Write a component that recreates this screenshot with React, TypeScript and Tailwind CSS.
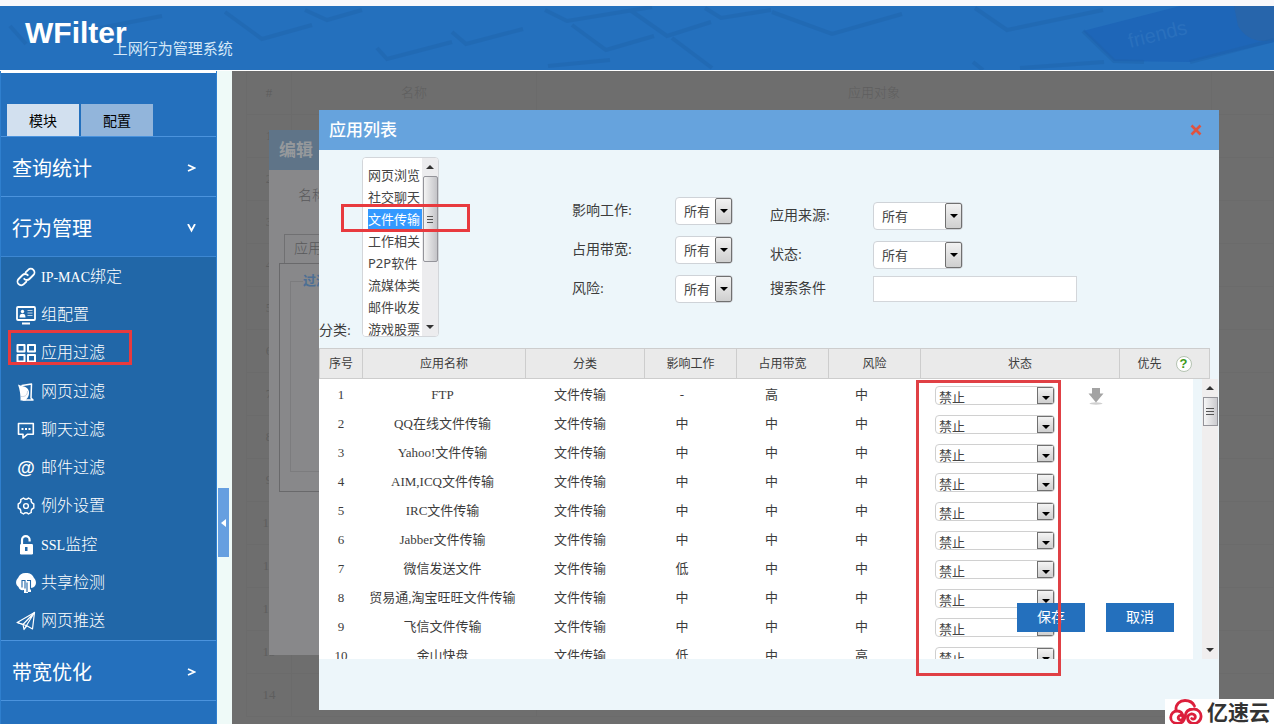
import { useState } from "react";
import type { ReactNode } from "react";

const SONG = "font-['Liberation_Serif','Noto_Sans_CJK_SC',serif]";
const HEI = "font-['Noto_Sans','Noto_Sans_CJK_SC',sans-serif]";

const categories = ["网页浏览", "社交聊天", "文件传输", "工作相关", "P2P软件", "流媒体类", "邮件收发", "游戏股票"];

type AppRow = { name: string; impact: string; bandwidth: string; risk: string };

const apps: AppRow[] = [
  { name: "FTP", impact: "-", bandwidth: "高", risk: "中" },
  { name: "QQ在线文件传输", impact: "中", bandwidth: "中", risk: "中" },
  { name: "Yahoo!文件传输", impact: "中", bandwidth: "中", risk: "中" },
  { name: "AIM,ICQ文件传输", impact: "中", bandwidth: "中", risk: "中" },
  { name: "IRC文件传输", impact: "中", bandwidth: "中", risk: "中" },
  { name: "Jabber文件传输", impact: "中", bandwidth: "中", risk: "中" },
  { name: "微信发送文件", impact: "低", bandwidth: "中", risk: "中" },
  { name: "贸易通,淘宝旺旺文件传输", impact: "中", bandwidth: "中", risk: "中" },
  { name: "飞信文件传输", impact: "中", bandwidth: "中", risk: "中" },
  { name: "金山快盘", impact: "低", bandwidth: "中", risk: "高" },
];

const stroke = { fill: "none", stroke: "currentColor", strokeLinejoin: "round", strokeLinecap: "round" } as const;

const icons: Record<string, ReactNode> = {
  link: (
    <g {...stroke} strokeWidth="1.8">
      <path d="M8.2 11.8a3.6 3.6 0 0 0 5.2.2l4-4a3.6 3.6 0 0 0-5.200-5.200L9.600 5.400" />
      <path d="M11.800 8.200a3.6 3.6 0 0 0-5.200-.2l-4 4a3.6 3.6 0 0 0 5.200 5.200l2.600-2.600" />
    </g>
  ),
  card: (
    <>
      <rect x="1" y="2" width="18" height="13" rx="1" {...stroke} strokeWidth="1.8" />
      <circle cx="6.5" cy="6.5" r="1.7" fill="currentColor" />
      <path d="M3.5 12.5c0-2.800 1-3.800 3-3.800s3 1 3 3.800z" fill="currentColor" />
      <path d="M11.5 5.5h5M11.5 8h5M11.5 10.5h5" stroke="currentColor" strokeWidth="1.2" opacity=".7" />
      <path d="M6 18.5h8" stroke="currentColor" strokeWidth="2" />
    </>
  ),
  grid: (
    <g {...stroke} strokeWidth="2">
      <rect x="1.500" y="2" width="7" height="6.500" />
      <rect x="12" y="2" width="7" height="6.500" />
      <rect x="1.500" y="12" width="7" height="6.500" />
      <rect x="12" y="12" width="7" height="6.500" />
    </g>
  ),
  page: (
    <>
      <path d="M6 3.5 15.500 2l-.5 14 2 2H7" {...stroke} strokeWidth="1.5" />
      <path d="M2 2.5c1.5 1 3 1 6 2 4 1.500 5.500 4 5 7.500-.4 3-2 4.500-3.500 6.500h-5c.3-5-.6-10.500-2.500-16z" fill="currentColor" />
      <path d="M5.500 14.500c3 .5 6-1 6-5" {...stroke} stroke="#c3cfdf" />
    </>
  ),
  chat: (
    <>
      <path d="M2.500 3.500h14.800v10.800h-6L7 18v-3.700H2.500z" {...stroke} strokeWidth="1.6" />
      <path d="M5.500 9h2M9 9h2M12.500 9h2" stroke="currentColor" strokeWidth="2" />
    </>
  ),
  gear: (
    <g {...stroke} strokeWidth="1.4">
      <path d="M7.500 2c1.600 1.600 3.400 1.600 5 0l2.800 1.600c-.5 2.200.3 3.700 2.500 4.400v4c-2.200.7-3 2.200-2.500 4.400L12.500 18c-1.600-1.600-3.400-1.600-5 0l-2.800-1.600c.5-2.200-.3-3.700-2.500-4.400V8c2.200-.7 3-2.200 2.500-4.400z" />
      <circle cx="10" cy="10" r="2.400" />
    </g>
  ),
  lock: (
    <>
      <path d="M6 9.500V5a3.800 3.800 0 0 1 7.600 0v1.500" fill="none" stroke="currentColor" strokeWidth="2.200" />
      <rect x="4" y="9" width="13" height="10.500" rx="1.200" fill="currentColor" />
      <rect x="9" y="12" width="2.500" height="4" fill="#2167a8" />
    </>
  ),
  share: (
    <>
      <path
        d="M10 0a8 8 0 0 1 8 5c3 3 2.500 8-1 9.500L15 15v4h-3v1H8v-3c-3 .6-5-.8-5.500-3C-.8 11.500-.5 7.500 2 5a8.500 8.500 0 0 1 8-5z"
        fill="currentColor"
      />
      <path d="M6 14.500V7.500h3v8M11 19v-9.500M11 7.500h3.500v9" fill="none" stroke="#2167a8" strokeWidth="1.100" />
    </>
  ),
  plane: (
    <g {...stroke} strokeWidth="1.2">
      <path d="M1.200 11.500 18.500 1.500 16.500 18 10.800 14.800z" />
      <path d="M1.200 11.500 7 13.500 18.500 1.500 8 18.500 7 13.500M8 18.500l2.800-3.700" />
    </g>
  ),
};

const menu = [
  { icon: "link", latin: "IP-MAC", label: "绑定" },
  { icon: "card", label: "组配置" },
  { icon: "grid", label: "应用过滤" },
  { icon: "page", label: "网页过滤" },
  { icon: "chat", label: "聊天过滤" },
  { icon: "at", label: "邮件过滤" },
  { icon: "gear", label: "例外设置" },
  { icon: "lock", latin: "SSL", label: "监控" },
  { icon: "share", label: "共享检测" },
  { icon: "plane", label: "网页推送" },
];

function Caret({ up = false }: { up?: boolean }) {
  return (
    <svg viewBox="0 0 8 4" className="h-1 w-2 shrink-0" aria-hidden="true">
      <path d={up ? "M0 4 4 0l4 4z" : "M0 0h8L4 4z"} fill="currentColor" />
    </svg>
  );
}

function Header() {
  return (
    <header className="relative shrink-0 border-t-[6px] border-[#f8f8fb] bg-[#2470bd]">
      <svg
        className="absolute inset-0 size-full"
        viewBox="0 0 1274 64"
        preserveAspectRatio="none"
        fill="none"
        aria-hidden="true"
      >
        <path d="M1083 25 1180 0h94v36l-84 20-76-1z" fill="#1e66b8" />
        <path d="M1234 0h40v34c-20 4-30-4-36-14z" fill="#2765ab" />
        <g stroke="#1f62a9" strokeWidth="4" opacity=".4">
          <path d="M225 6l37 27 50-14M305 4l22 10 35-10M377 42l10 11 65-17M452 26l14 12 57-15" />
          <path d="M545 4l22 11 85-14M572 19l34 25 48-14M630 4l37 26 44-14M672 32l40 30" />
          <path d="M705 2l16 10 50-8M772 6l60 22 70-20M975 2l32 22 96-20M1083 25l31 30 30 1M1190 56l84-22" />
          <path d="M10 20l16 18M100 22l62-12M548 60l62-6M973 56l10 8M1020 62l84-6" />
        </g>
        <text
          x="1130"
          y="42"
          transform="rotate(-14 1130 42)"
          fontSize="20"
          fill="#2a70bd"
          fontFamily="Liberation Sans"
        >
          friends
        </text>
      </svg>
      <div className="relative flex h-16 items-start pl-[25px] text-white">
        <h1 className="pt-[9px] font-['Liberation_Sans',sans-serif] text-3xl font-bold">WFilter</h1>
        <p className={`-ml-3.5 pt-8 text-[15px] leading-5 text-[#d5e8f8] ${HEI}`}>上网行为管理系统</p>
      </div>
    </header>
  );
}

function Section({ title, open = false }: { title: string; open?: boolean }) {
  return (
    <button
      type="button"
      aria-expanded={open}
      className={`flex h-[60px] w-full items-center justify-between border-t border-[#4b93dd] pt-1 pr-5 pl-[11px] text-xl text-white ${HEI}`}
    >
      {title}
      <svg
        viewBox="0 0 10 10"
        className="size-2.5"
        fill="none"
        stroke="currentColor"
        strokeWidth="1.8"
        aria-hidden="true"
      >
        <path d={open ? "M2 0l3.500 6.500L9 0" : "M2 1l6.500 3L2 7"} />
      </svg>
    </button>
  );
}

function Sidebar() {
  return (
    <aside className="w-[217px] shrink-0 overflow-hidden border-x border-[#2f7fce] bg-[#2470bd]">
      <div className="h-0.5 bg-white" />
      <div className={`flex gap-0.5 pt-[31px] pl-1.5 text-sm text-black ${HEI}`}>
        <button type="button" className="h-8 w-[72px] bg-[#d2e0ef] pt-0.5">
          模块
        </button>
        <button type="button" className="h-8 w-[72px] bg-[#92b5db] pt-0.5">
          配置
        </button>
      </div>
      <nav>
        <Section title="查询统计" />
        <Section title="行为管理" open />
        <ul className={`grid h-96 border-t border-[#3d87d2] bg-[#2167a8] text-base text-white ${SONG}`}>
          {menu.map((item) => (
            <li key={item.label} className="relative flex items-center pt-px">
              <a href="#" className="flex items-center gap-[5px] pl-[15px]">
                {item.icon === "at" ? (
                  <span className="w-5 text-center font-['Liberation_Sans',sans-serif] text-lg leading-5 font-bold">
                    @
                  </span>
                ) : (
                  <svg viewBox="0 0 20 20" className="size-5" aria-hidden="true">
                    {icons[item.icon]}
                  </svg>
                )}
                <span className="font-light">
                  {item.latin && <span className="text-sm">{item.latin}</span>}
                  {item.label}
                </span>
              </a>
              {item.icon === "grid" && (
                <span className="pointer-events-none absolute -top-1 left-[7px] h-[35px] w-[124px] border-3 border-[#e83a3e]" />
              )}
            </li>
          ))}
        </ul>
        <Section title="带宽优化" />
        <div className="h-6 border-t border-[#4b93dd]" />
      </nav>
    </aside>
  );
}

function BackgroundPage() {
  return (
    <div
      aria-hidden="true"
      className={`absolute inset-0 overflow-hidden pl-[14px] text-[13px] font-light text-[#5e5e5e] ${SONG}`}
    >
      <table className="w-full table-fixed border-collapse text-center">
        <colgroup>
          <col className="w-[45px]" />
          <col className="w-[245px]" />
          <col className="w-[675px]" />
          <col />
        </colgroup>
        <tbody>
          <tr className="h-[43px] *:border *:border-[#6b6b6b]">
            <td>#</td>
            <td>名称</td>
            <td>应用对象</td>
            <td />
          </tr>
          {Array.from({ length: 14 }, (_, i) => (
            <tr key={i} className="h-[43px] *:border *:border-[#6b6b6b]">
              <td>{i + 1}</td>
              <td />
              <td />
              <td />
            </tr>
          ))}
        </tbody>
      </table>
      <section className="absolute top-[59px] left-[37px] h-[525px] w-[600px] bg-[#88888a] text-sm text-[#58585a]">
        <h2 className={`bg-[#5f7488] pt-0.5 pb-0.5 pl-[10px] text-[17px] leading-9 font-bold text-[#96999c] ${HEI}`}>
          编辑
        </h2>
        <p className="pt-4 pl-[29px] leading-5">名称</p>
        <p className="mt-7 ml-[15px] w-20 border border-b-0 border-[#707072] pl-[9px] leading-7">应用</p>
        <div className="ml-[10px] h-[229px] border border-[#69696b] pt-2 pl-[10px]">
          <fieldset className="h-[200px] border border-[#7c7c7e] pl-3">
            <legend className="text-[13px] font-bold text-[#4d6f94]">过滤</legend>
          </fieldset>
        </div>
      </section>
    </div>
  );
}

function CategoryList() {
  const [category, setCategory] = useState("文件传输");

  return (
    <div className="flex h-[180px] w-[77px] overflow-hidden rounded-sm border border-[#d3d6da] bg-white">
      <select
        id="category"
        size={8}
        value={category}
        onChange={(e) => setCategory(e.target.value)}
        className={`h-full min-w-0 flex-1 overflow-hidden bg-white pt-[7px] pl-[5px] text-[13px] text-[#444] outline-none [scrollbar-width:none] ${HEI}`}
      >
        {categories.map((name) => (
          <option
            key={name}
            value={name}
            className="h-[22px] min-h-[22px] p-0 leading-[22px] checked:bg-[linear-gradient(#3399ff,#3399ff)] checked:text-white"
          >
            {name}
          </option>
        ))}
      </select>
      <div className="flex w-4 flex-col items-center bg-[#ececee] py-[7px] text-[#333]">
        <Caret up />
        <div className="mt-[7px] flex h-[86px] w-[15px] flex-col items-center justify-center gap-0.5 rounded-xs border border-[#94949a] bg-linear-to-r from-[#f4f4f4] to-[#c4c4c8]">
          <i className="h-px w-1.5 bg-[#555]" />
          <i className="h-px w-1.5 bg-[#555]" />
          <i className="h-px w-1.5 bg-[#555]" />
        </div>
        <div className="flex-1" />
        <Caret />
      </div>
    </div>
  );
}

function FilterSelect({ id, label, wide = false }: { id: string; label: string; wide?: boolean }) {
  return (
    <div className="flex h-7 items-center">
      <label htmlFor={id} className="w-[103px] text-sm">
        {label}
      </label>
      <div className={`relative h-7 rounded-sm border border-[#cfd3d8] bg-white ${wide ? "w-[90px]" : "w-[58px]"}`}>
        <select id={id} className={`size-full appearance-none pt-0.5 pl-2 text-[13px] text-[#444] outline-none ${HEI}`}>
          <option>所有</option>
        </select>
        <span className="pointer-events-none absolute inset-y-0 right-0 flex w-[17px] items-center justify-center rounded-xs border border-[#707070] bg-linear-to-b from-[#f2f2f2] to-[#cfcfcf] text-black">
          <Caret />
        </span>
      </div>
    </div>
  );
}

function Filters() {
  return (
    <div className={`flex h-[198px] items-start pt-[7px] text-[#3c3c3c] ${SONG}`}>
      <div className="flex items-end gap-[6px]">
        <label htmlFor="category" className="w-[37px] text-sm leading-3">
          分类:
        </label>
        <CategoryList />
      </div>
      <div className="flex flex-col gap-[11px] pt-10 pl-[133px]">
        <FilterSelect id="impact" label="影响工作:" />
        <FilterSelect id="bandwidth" label="占用带宽:" />
        <FilterSelect id="risk" label="风险:" />
      </div>
      <div className="flex flex-col gap-[11px] pt-[45px] pl-[37px]">
        <FilterSelect id="source" label="应用来源:" wide />
        <FilterSelect id="state" label="状态:" wide />
        <div className="-mt-1 flex items-center">
          <label htmlFor="keyword" className="w-[103px] text-sm">
            搜索条件
          </label>
          <input
            id="keyword"
            type="text"
            className="h-[26px] w-[204px] border border-[#d3d6da] bg-white px-2 text-[13px]"
          />
        </div>
      </div>
    </div>
  );
}

function AppTable() {
  return (
    <div className={`relative text-[13px] text-[#3c3c3c] ${SONG}`}>
      <table className="w-[calc(100%-9px)] table-fixed border-collapse bg-[#eaeaea]">
        <colgroup>
          <col className="w-[43px]" />
          <col className="w-[163px]" />
          <col className="w-[119px]" />
          <col className="w-[92px]" />
          <col className="w-[92px]" />
          <col className="w-[92px]" />
          <col className="w-[199px]" />
          <col />
        </colgroup>
        <thead>
          <tr className={`h-[30px] *:border *:border-[#cdcdcd] *:p-0 *:text-xs *:font-normal ${HEI}`}>
            <th>序号</th>
            <th>应用名称</th>
            <th>分类</th>
            <th>影响工作</th>
            <th>占用带宽</th>
            <th>风险</th>
            <th>状态</th>
            <th>
              <span className="flex items-center justify-center gap-3.5">
                优先
                <span className="flex size-4 items-center justify-center rounded-full border border-[#b5c3b2] bg-white font-['Liberation_Sans',sans-serif] text-[13px] font-bold text-[#3f9a1c]">
                  ?
                </span>
              </span>
            </th>
          </tr>
        </thead>
      </table>

      <div className="flex h-[280px] justify-between pr-px">
        <div className="mr-[9px] flex-1 overflow-hidden bg-white">
          <table className="w-full table-fixed border-collapse text-center">
            <colgroup>
              <col className="w-11" />
              <col className="w-[159px]" />
              <col className="w-[116px]" />
              <col className="w-[88px]" />
              <col className="w-[91px]" />
              <col className="w-[89px]" />
              <col className="w-[178px]" />
              <col />
            </colgroup>
            <tbody>
              {apps.map((app, i) => (
                <tr key={app.name} className="h-[29px] *:p-0 *:pt-0.5">
                  <td>{i + 1}</td>
                  <td className="whitespace-nowrap">{app.name}</td>
                  <td>文件传输</td>
                  <td>{app.impact}</td>
                  <td>{app.bandwidth}</td>
                  <td>{app.risk}</td>
                  <td>
                    <div className="relative mx-auto mt-0.5 h-[19px] w-[120px] overflow-hidden rounded-sm border border-[#d0d0d0] bg-white">
                      <select
                        aria-label={`${app.name} 状态`}
                        className={`block h-5 w-full appearance-none pl-[3px] text-[13px] leading-5 text-[#444] outline-none ${HEI}`}
                      >
                        <option>禁止</option>
                      </select>
                      <span className="pointer-events-none absolute inset-y-0 right-0 flex w-[17px] items-center justify-center border border-[#707070] bg-linear-to-b from-[#f4f4f4] to-[#cfcfcf] pt-1 text-black">
                        <Caret />
                      </span>
                    </div>
                  </td>
                  <td>
                    {i === 0 && (
                      <button type="button" aria-label="降低优先级" className="ml-1 block pt-0.5">
                        <svg viewBox="0 0 16 18" className="h-[18px] w-4">
                          <ellipse cx="8" cy="16.5" rx="6.5" ry="1.2" fill="#cfcfcf" />
                          <path d="M4 1h8v5.500h3.500L8 15.500.5 6.500H4z" fill="#a3a3a3" />
                        </svg>
                      </button>
                    )}
                  </td>
                </tr>
              ))}
            </tbody>
          </table>
        </div>
        <div className="flex w-4 flex-col items-center bg-[#f0eeee] py-[7px] text-[#333]">
          <Caret up />
          <div className="mt-[7px] flex h-[29px] w-[15px] flex-col items-center justify-center gap-0.5 border border-[#94949a] bg-linear-to-r from-[#f6f6f6] to-[#cbcbcf]">
            <i className="h-px w-2 bg-[#555]" />
            <i className="h-px w-2 bg-[#555]" />
            <i className="h-px w-2 bg-[#555]" />
          </div>
          <div className="flex-1" />
          <Caret />
        </div>
      </div>

      <div className="absolute right-[45px] bottom-[27px] flex gap-[21px] text-sm text-white">
        <button type="button" className="h-[29px] w-[68px] bg-[#2470bd]">
          保存
        </button>
        <button type="button" className="h-[29px] w-[68px] bg-[#2470bd]">
          取消
        </button>
      </div>
      <div className="pointer-events-none absolute top-8 right-[158px] -bottom-[17px] w-[145px] border-3 border-[#e04045]" />
    </div>
  );
}

function AppListDialog() {
  return (
    <section role="dialog" aria-label="应用列表" className="w-full self-start bg-[#edf6fa] pb-[51px]">
      <div className="flex h-10 items-center justify-between bg-[#66a3dd] pr-[17px] pl-[10px]">
        <h2 className={`text-[17px] font-medium text-white ${HEI}`}>应用列表</h2>
        <button type="button" aria-label="关闭">
          <svg viewBox="0 0 12 12" className="size-3" aria-hidden="true">
            <path d="M1.500 1.500l9 9M10.500 1.500l-9 9" stroke="#e0533f" strokeWidth="2.600" />
          </svg>
        </button>
      </div>
      <div className="relative">
        <Filters />
        <div className="pointer-events-none absolute top-[54px] left-[22px] h-7 w-[129px] border-3 border-[#e83a3e]" />
      </div>
      <AppTable />
    </section>
  );
}

function Watermark() {
  return (
    <div className="absolute right-0 bottom-0 flex h-[25px] items-center gap-1 overflow-hidden bg-white px-1">
      <svg
        viewBox="0 0 34 25"
        className="h-[25px] w-[34px]"
        fill="none"
        stroke="#dc1f3c"
        strokeWidth="2.800"
        strokeLinecap="round"
        aria-hidden="true"
      >
        <path d="M7 11C6.500 5 11 1.500 16 1.500c4.500 0 8 2.200 9.500 5.500" />
        <path d="M12 16.500a2.300 2.300 0 1 0 1.500 3.500c1.500-3-.5-8-5-8a6.500 6.500 0 0 0-6.800 6.500c0 3.500 3 6 6.800 6 5 0 7-3.500 7.500-7 .5-5 3-7.500 8.500-7.500a7.200 7.200 0 1 1-2 14c-4.500-1-5.500-8-.5-9 3-.5 5 2 4 4-.8 1.500-2.500 1.500-3.300.5" />
      </svg>
      <span className={`text-[21px] leading-6 font-bold text-[#333] ${HEI}`}>亿速云</span>
    </div>
  );
}

export default function App() {
  return (
    <div className="relative flex h-screen flex-col overflow-hidden bg-[#effaf8]">
      <Header />
      <div className="flex min-h-0 flex-1 border-t border-white">
        <Sidebar />
        <div className="flex w-[15px] shrink-0 items-start pt-[417px] pl-px">
          <button
            type="button"
            aria-label="收起侧栏"
            className="flex h-[69px] w-[11px] items-center justify-center bg-[#669fe0]"
          >
            <svg viewBox="0 0 5 8" className="h-2.5 w-[5px]" aria-hidden="true">
              <path d="M5 0v8L0 4z" fill="#fff" />
            </svg>
          </button>
        </div>
        <main className="relative flex min-w-0 flex-1 bg-[#6e6e6e]">
          <BackgroundPage />
          <div className="relative flex w-full pt-[39px] pr-[55px] pl-[87px]">
            <AppListDialog />
          </div>
        </main>
      </div>
      <Watermark />
    </div>
  );
}
